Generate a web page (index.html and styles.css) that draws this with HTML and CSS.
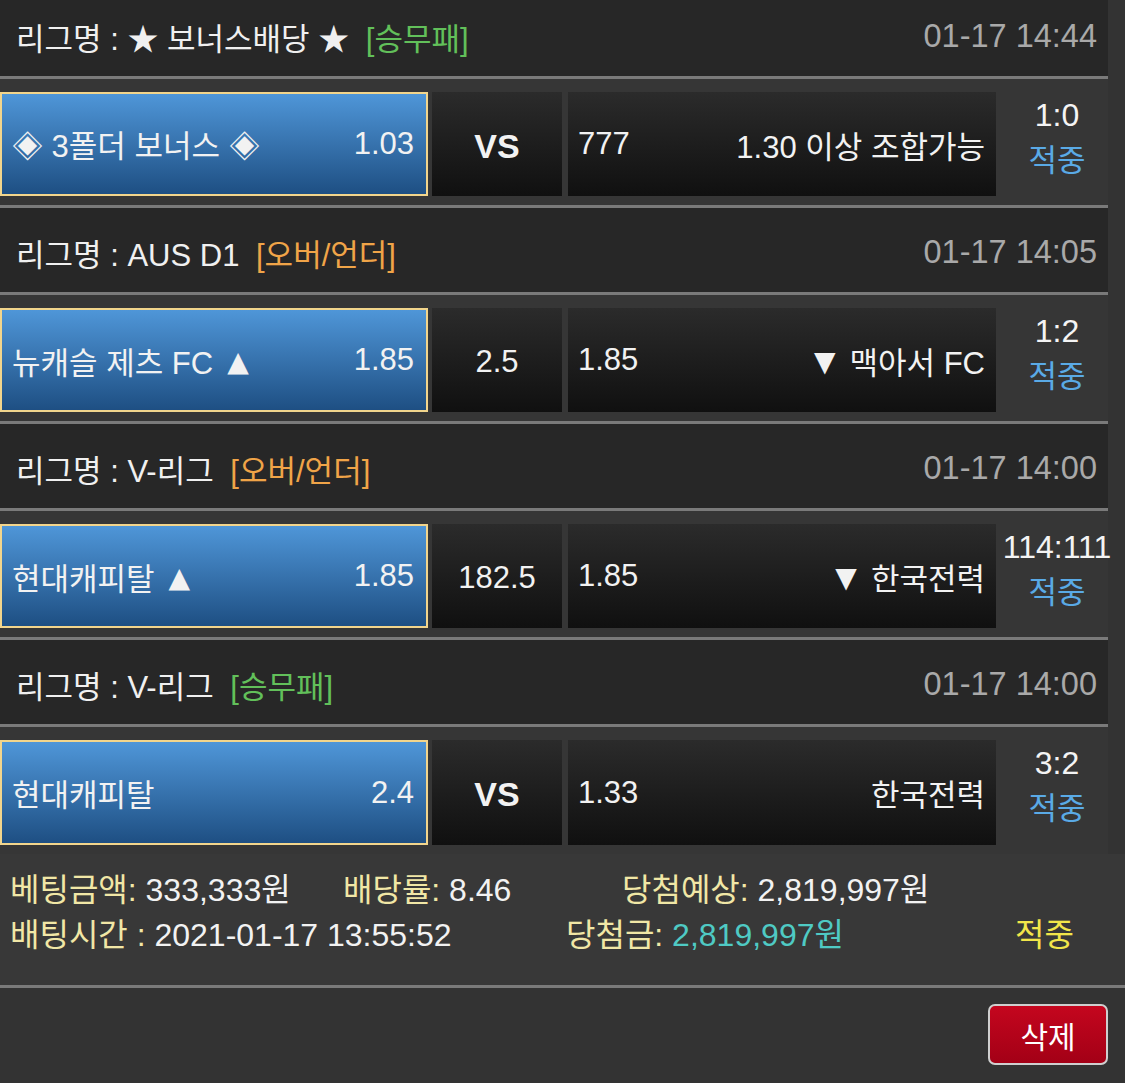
FILE: index.html
```html
<!DOCTYPE html>
<html lang="ko">
<head>
  <meta charset="UTF-8" />
  <meta name="viewport" content="width=device-width, initial-scale=1" />
  <title>베팅내역</title>
  <link rel="stylesheet" href="styles.css">
</head>
<body>

<div class="slip">

  <!-- Game 1 -->
  <div class="league first">
    <span class="league-name">리그명 : ★ 보너스배당 ★ <span class="tag win">[승무패]</span></span>
    <span class="league-time">01-17 14:44</span>
  </div>
  <div class="match">
    <div class="home"><span>◈ 3폴더 보너스 ◈</span><span>1.03</span></div>
    <div class="mid vs">VS</div>
    <div class="away"><span>777</span><span>1.30 이상 조합가능</span></div>
    <div class="result"><span class="score">1:0</span><span class="hit">적중</span></div>
  </div>

  <!-- Game 2 -->
  <div class="league">
    <span class="league-name">리그명 : AUS D1 <span class="tag ou">[오버/언더]</span></span>
    <span class="league-time">01-17 14:05</span>
  </div>
  <div class="match">
    <div class="home"><span>뉴캐슬 제츠 FC<i class="arrow up">▲</i></span><span>1.85</span></div>
    <div class="mid">2.5</div>
    <div class="away"><span>1.85</span><span><i class="arrow down">▼</i>맥아서 FC</span></div>
    <div class="result"><span class="score">1:2</span><span class="hit">적중</span></div>
  </div>

  <!-- Game 3 -->
  <div class="league">
    <span class="league-name">리그명 : V-리그 <span class="tag ou">[오버/언더]</span></span>
    <span class="league-time">01-17 14:00</span>
  </div>
  <div class="match">
    <div class="home"><span>현대캐피탈<i class="arrow up">▲</i></span><span>1.85</span></div>
    <div class="mid">182.5</div>
    <div class="away"><span>1.85</span><span><i class="arrow down">▼</i>한국전력</span></div>
    <div class="result"><span class="score">114:111</span><span class="hit">적중</span></div>
  </div>

  <!-- Game 4 -->
  <div class="league">
    <span class="league-name">리그명 : V-리그 <span class="tag win">[승무패]</span></span>
    <span class="league-time">01-17 14:00</span>
  </div>
  <div class="match last">
    <div class="home"><span>현대캐피탈</span><span>2.4</span></div>
    <div class="mid vs">VS</div>
    <div class="away"><span>1.33</span><span>한국전력</span></div>
    <div class="result"><span class="score">3:2</span><span class="hit">적중</span></div>
  </div>

</div>

<div class="bet-info">
  <div class="info-row row-a">
    <span><em>베팅금액:</em> 333,333원</span>
    <span><em>배당률:</em> 8.46</span>
    <span><em>당첨예상:</em> 2,819,997원</span>
  </div>
  <div class="info-row row-b">
    <span><em>배팅시간 :</em> 2021-01-17 13:55:52</span>
    <span><em>당첨금:</em> <b class="prize">2,819,997원</b></span>
    <span class="status">적중</span>
  </div>
</div>

<div class="actions">
  <button class="delete-btn">삭제</button>
</div>

</body>
</html>
```

FILE: styles.css
```css
body {
  font-family: 'Liberation Sans', 'Noto Sans CJK KR', sans-serif;
  background-color: #333333;
  color: #f2f2f2;
  margin: 0;
  padding: 0;
  overflow: hidden;
}

.slip {
  width: 1108px;
  margin-top: -8px;
}

/* League header */
.league {
  height: 87px;
  background-color: #272727;
  border-bottom: 3px solid #7a7a7a;
  display: flex;
  align-items: center;
  justify-content: space-between;
  padding: 4px 11px 0 16px;
  box-sizing: border-box;
  font-size: 31px;
}

.league-name {
  color: #f0f0f0;
}

.tag {
  margin-left: 8px;
}

.tag.win {
  color: #62c05a;
}

.tag.ou {
  color: #f0a448;
}

.league-time {
  color: #a9a9a9;
  font-size: 32.5px;
}

/* Match row */
.match {
  height: 129px;
  background-color: #363636;
  border-bottom: 3px solid #7a7a7a;
  box-sizing: border-box;
  display: flex;
  padding: 13px 0 9px;
  font-size: 31px;
}

.match.last {
  border-bottom: none;
  height: 127px;
}

.match > div {
  flex-shrink: 0;
  box-sizing: border-box;
}

.arrow {
  font-style: normal;
  font-family: 'DejaVu Sans', sans-serif;
  font-size: 28px;
  position: relative;
  top: -3px;
}

.arrow.up {
  margin-left: 14px;
}

.arrow.down {
  margin-right: 14px;
}

.home {
  width: 428px;
  border: 2px solid #f2d58c;
  background: linear-gradient(to bottom, #4f96d8, #1e4f83);
  display: flex;
  align-items: center;
  justify-content: space-between;
  padding: 0 12px 0 10px;
}

.mid {
  width: 130px;
  margin: 0 6px 0 4px;
  background: linear-gradient(to bottom, #2b2b2b, #101010);
  display: flex;
  align-items: center;
  justify-content: center;
  padding-top: 3px;
}

.mid.vs {
  font-weight: bold;
  font-size: 34px;
  padding-top: 4px;
}

.away {
  width: 428px;
  background: linear-gradient(to bottom, #2b2b2b, #101010);
  display: flex;
  align-items: center;
  justify-content: space-between;
  padding: 0 11px 0 10px;
}

.result {
  width: 112px;
  padding-left: 10px;
  display: flex;
  flex-direction: column;
  align-items: center;
  justify-content: center;
  line-height: 46px;
  margin-top: -13px;
}

.score {
  color: #f4f4f4;
  white-space: nowrap;
  font-size: 32px;
}

.hit {
  color: #5aaae6;
}

/* Bet summary */
.bet-info {
  background-color: #383838;
  border-bottom: 3px solid #7a7a7a;
  height: 134px;
  box-sizing: border-box;
  padding-top: 10px;
  font-size: 32px;
}

.info-row {
  display: grid;
  height: 45px;
  align-items: center;
  padding-left: 10px;
  white-space: nowrap;
}

.row-a {
  grid-template-columns: 333px 279px 1fr;
}

.row-b {
  grid-template-columns: 556px 449px 1fr;
}

.info-row em {
  font-style: normal;
  color: #f1e7a6;
}

.prize {
  font-weight: normal;
  color: #4fcac4;
}

.status {
  color: #f2e64a;
}

/* Delete */
.actions {
  display: flex;
  justify-content: flex-end;
  padding: 16px 17px 0 0;
}

.delete-btn {
  width: 120px;
  height: 61px;
  border: 2px solid #cfcfcf;
  border-radius: 7px;
  background: linear-gradient(to bottom, #c4061e, #a30016);
  color: #fff;
  font-family: 'Liberation Sans', 'Noto Sans CJK KR', sans-serif;
  font-size: 30px;
  cursor: pointer;
}
```
